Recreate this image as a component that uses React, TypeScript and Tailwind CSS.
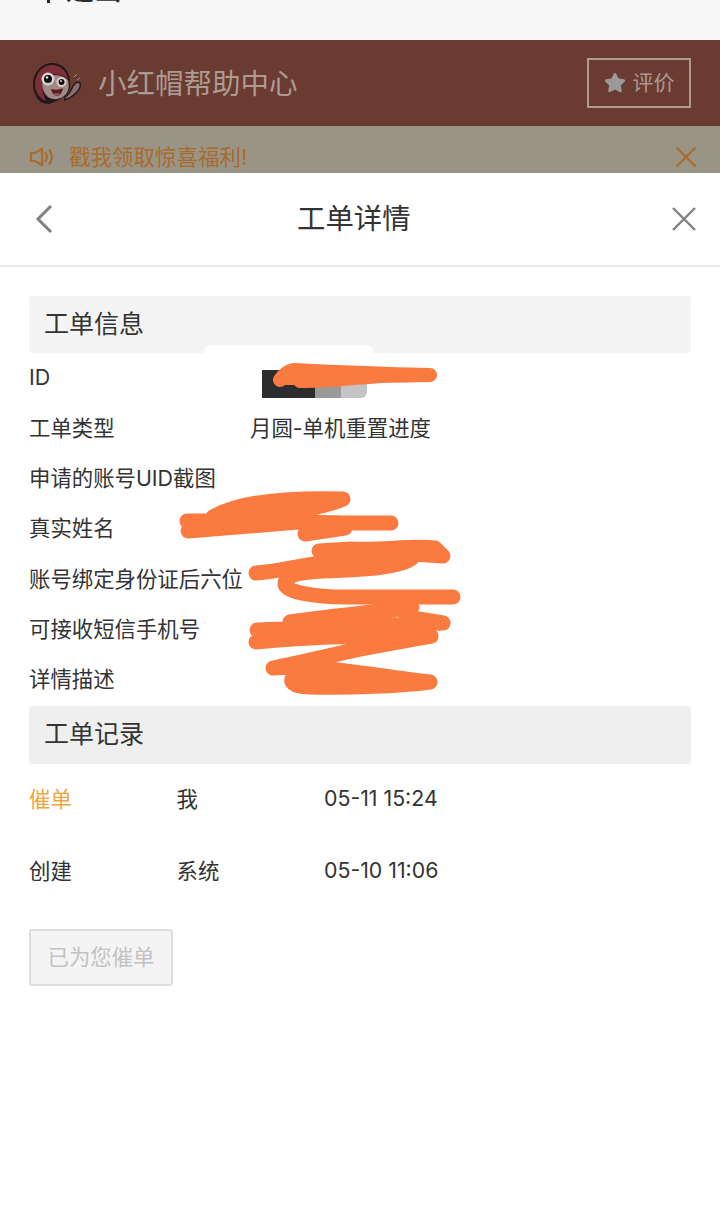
import { Star } from "lucide-react"

const font = { fontFamily: '"Inter", "Noto Sans CJK SC", sans-serif' }

const infoRows = [
  { label: "ID", value: "" },
  { label: "工单类型", value: "月圆-单机重置进度" },
  { label: "申请的账号UID截图", value: "" },
  { label: "真实姓名", value: "" },
  { label: "账号绑定身份证后六位", value: "" },
  { label: "可接收短信手机号", value: "" },
  { label: "详情描述", value: "" },
]

function Avatar() {
  return (
    <svg width="50" height="44" viewBox="0 0 50 44" className="mt-[1px] shrink-0">
      {/* hair */}
      <path d="M1 23C1 10 10 1 20 1c11 0 17 8 18 18 1 9-3 15-10 18-5 3-9 4-11 5-6 0-11-3-13-8-2-3-3-7-3-11Z" fill="#231719" />
      <path d="M3 23C3 11 11 3 20 3c9 0 15 7 16 14-8-6-18-6-24-1-3 5-2 14 2 23-7-3-11-9-11-16Z" fill="#7c2f38" />
      {/* face */}
      <path d="M11 17c6-5 17-6 25 1 2 7 0 13-4 16-5 4-12 4-16 1-5-4-7-12-5-18Z" fill="#a08a86" />
      <circle cx="16" cy="17" r="6.5" fill="#d9d2cf" />
      <circle cx="16" cy="17" r="4" fill="#120e10" />
      <circle cx="15" cy="15.5" r="1.2" fill="#e6e0de" />
      <circle cx="29.5" cy="20" r="5" fill="#d9d2cf" />
      <circle cx="29.5" cy="20" r="3" fill="#120e10" />
      <circle cx="29" cy="19" r="0.9" fill="#e6e0de" />
      <path d="M19 27c4 1 8 1 12-1-1 5-3 8-6 8-3 0-5-3-6-7Z" fill="#5a1c20" />
      <path d="M21 32c2-1 6-1 7 0-1 2-5 2-7 0Z" fill="#a85a5a" />
      {/* waving hand */}
      <path d="M33 35c3-2 6-6 8-11 2-3 5-5 7-3 1 3-1 7-4 10-4 4-8 6-11 7Z" fill="#8a6f6e" stroke="#231719" strokeWidth="1.4" />
      <path d="M42 15l3-3M45 18l3-2" stroke="#a08a86" strokeWidth="1" />
    </svg>
  )
}

function Scribbles() {
  return (
    <svg width="720" height="1231" viewBox="0 0 720 1231" className="absolute left-0 top-0 pointer-events-none">
      <g fill="none" stroke="#fb7a3f" strokeWidth="14" strokeLinecap="round" strokeLinejoin="round">
        <path d="M280 380c4-6 8-9 14-10 40 2 90 4 136 5M282 378c30 0 90-2 148-3M300 381c24 1 50-3 80-5" />
      </g>
      <g fill="none" stroke="#fb7a3f" strokeWidth="15" strokeLinecap="round" strokeLinejoin="round">
        <path d="M187 521l60-1M188 531c40-3 70-6 110-9l46 1h47M345 528l-40 6M213 517c20-12 60-20 130-18-12 6-30 9-50 13-25 5-50 8-80 9" />
        <path d="M319 551l32-2c30 2 60-4 84-1l8 8-60-4M256 573c30-2 50-10 85-12 30-2 65-9 72-4-6 10-50 13-90 14-20 1-38 3-38 13 0 8 30 13 60 13l108 0" />
        <path d="M290 622c40-6 90-10 122-15l-6 10 37 6-186 7M256 642c60-6 120-7 175-6l-66 12c-30 6-60 14-92 20 50-4 100 8 157 14-30 4-80 6-120 5-12 0-20-3-18-8 30-4 50-3 80-3" />
        <path d="M330 628c40-2 70 2 100 8M300 632c30 0 60 2 110 0M270 636c40-2 80-2 120-3" />
      </g>
    </svg>
  )
}

export default function App() {
  return (
    <div className="relative h-[1231px] w-[720px] overflow-hidden bg-white" style={font}>
      {/* 被弹层盖住的页面 */}
      <div className="flex h-[40px] items-start overflow-hidden bg-[#f7f7f7] pl-[47px]">
        <div className="h-[3px] w-[3px] shrink-0 bg-[#2a2a2a]" />
        <span className="-mt-[30px] ml-[16px] text-[28px] font-medium leading-[40px] text-[#2a2a2a]">退出</span>
      </div>

      <div className="flex h-[86px] items-center justify-between bg-[#693b31] pl-[32px] pr-[29px]">
        <div className="flex items-center gap-[16px]">
          <Avatar />
          <span className="mt-[3px] text-[28.5px] leading-none text-[#ad9a93]">小红帽帮助中心</span>
        </div>
        <div className="flex h-[50px] w-[104px] items-center justify-center gap-[7px] border-2 border-[#ad9a93] text-[21px] text-[#ad9a93]">
          <Star size={22} fill="#9a9a9a" stroke="#9a9a9a" strokeWidth={2} />
          <span>评价</span>
        </div>
      </div>

      <div className="flex h-[47px] items-start justify-between bg-[#9a9487] pl-[29px] pr-[23px] pt-[18px]">
        <div className="flex items-center gap-[15px] text-[21.5px] leading-[26px] text-[#a96b2c]">
          <svg width="25" height="20" viewBox="0 0 25 20" fill="none" stroke="#a96b2c" strokeWidth="2.2">
            <path d="M2 6h4l7-4v16l-7-4H2Z" />
            <path d="M16.5 6c1.6 2.6 1.6 5.4 0 8M20.5 3c3 4.4 3 9.6 0 14" strokeLinecap="round" />
          </svg>
          <span>戳我领取惊喜福利!</span>
        </div>
        <svg width="22" height="22" viewBox="0 0 22 22" className="mt-[2px]" stroke="#a96b2c" strokeWidth="2.2">
          <path d="M1.5 1.5l19 19M20.5 1.5l-19 19" />
        </svg>
      </div>

      {/* 工单详情弹层 */}
      <div className="absolute left-0 right-0 top-[173px] bottom-0 rounded-t-[20px] bg-white text-[#333333]">
        <div className="relative flex h-[94px] items-center justify-between border-b-2 border-[#e8e8e8] pl-[35px] pr-[24px]">
          <svg width="18" height="30" viewBox="0 0 18 30" fill="none" stroke="#808080" strokeWidth="3">
            <path d="M16 2 3 15l13 13" />
          </svg>
          <span className="absolute left-[297px] top-[29px] text-[28.4px] leading-[34px]">工单详情</span>
          <svg width="24" height="24" viewBox="0 0 24 24" stroke="#808080" strokeWidth="2.4">
            <path d="M1 1l22 22M23 1 1 23" />
          </svg>
        </div>

        <div className="px-[29px] pt-[29px]">
          <div className="flex h-[57px] items-center rounded-[3px] bg-[#f4f4f4] pl-[15px] text-[25px]">工单信息</div>

          <div className="flex flex-col">
            {infoRows.map((row) => (
              <div key={row.label} className="flex h-[50.4px] items-center pb-[2px] text-[21.4px]">
                <span className="w-[221px] shrink-0 whitespace-nowrap">{row.label}</span>
                <span className="whitespace-nowrap">{row.value}</span>
              </div>
            ))}
          </div>

          <div className="flex h-[58px] items-center rounded-[3px] bg-[#efefef] pl-[15px] text-[25px]">工单记录</div>

          <div className="mt-[17px] flex flex-col text-[21.4px]">
            <div className="flex h-[36px] items-center">
              <span className="w-[147.5px] text-[#eda63d]">催单</span>
              <span className="w-[147.5px]">我</span>
              <span className="mt-[1px] text-[21.3px]">05-11 15:24</span>
            </div>
            <div className="mt-[36px] flex h-[36px] items-center">
              <span className="w-[147.5px]">创建</span>
              <span className="w-[147.5px]">系统</span>
              <span className="mt-[1px] text-[21.3px]">05-10 11:06</span>
            </div>
          </div>

          <div className="mt-[40px] flex h-[57px] w-[144px] items-center justify-center rounded-[3px] border-2 border-[#dedede] bg-[#f4f4f4] text-[21.4px] text-[#c2c2c2]">
            已为您催单
          </div>
        </div>
      </div>

      {/* 截图里的遮挡痕迹 */}
      <div className="absolute left-[204px] top-[345px] h-[10px] w-[169px] rounded-t-[6px] bg-white" />
      <div className="absolute left-[262px] top-[370px] flex h-[28px] w-[105px] overflow-hidden rounded-br-[6px]">
        <div className="w-[53px] bg-[#2b2d2e]" />
        <div className="w-[26px] bg-[#999999]" />
        <div className="w-[26px] bg-[#c4c4c6]" />
      </div>
      <Scribbles />
    </div>
  )
}
